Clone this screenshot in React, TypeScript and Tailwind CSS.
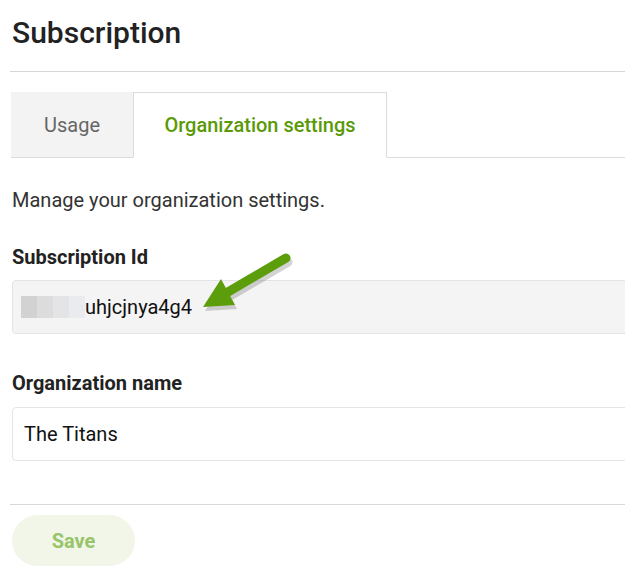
import React from 'react'

const blurBlocks = [
  { w: 'w-[16px]', c: 'bg-[#d2d2d2]' },
  { w: 'w-[16px]', c: 'bg-[#dcdcdc]' },
  { w: 'w-[16px]', c: 'bg-[#e4e4e6]' },
  { w: 'w-[16px]', c: 'bg-[#e9ebee]' },
]

const Arrow = () => (
  <svg
    className="absolute left-[190px] top-[245px]"
    width="110"
    height="80"
    viewBox="0 0 110 80"
  >
    {/* soft shadow */}
    <g opacity="0.25" transform="translate(2 4)">
      <line x1="96" y1="13" x2="38" y2="47" stroke="#555" strokeWidth="9" strokeLinecap="round" />
      <polygon points="13,62 31,34 45,60" fill="#555" />
    </g>
    <line x1="96" y1="13" x2="38" y2="47" stroke="#5c9d0b" strokeWidth="9" strokeLinecap="round" />
    <polygon points="13,62 31,34 45,60" fill="#5c9d0b" />
  </svg>
)

export default function App() {
  return (
    <div
      className="relative w-[625px] h-[584px] overflow-hidden bg-white"
      style={{ fontFamily: 'Roboto, "Liberation Sans", sans-serif' }}
    >
      <div className="pl-[12px] pt-[15px]">
        <h1 className="text-[30px] font-medium leading-[36px] text-[#222]">Subscription</h1>
      </div>

      <div className="ml-[10px] mt-[20px] w-[640px] border-t border-[#d6d6d6]" />

      {/* Tabs */}
      <div className="ml-[11px] mt-[20px] flex w-[640px] border-b border-[#dcdcdc]">
        <div className="flex h-[65px] w-[122px] items-center justify-center bg-[#f3f3f3] text-[20px] text-[#666]">
          Usage
        </div>
        <div className="-mb-px flex h-[66px] w-[254px] items-center justify-center border border-b-white border-[#dcdcdc] bg-white text-[20px] font-medium text-[#5a9a08]">
          Organization settings
        </div>
      </div>

      <div className="pl-[12px]">
        <p className="mt-[30px] text-[20px] leading-[24px] text-[#333]">
          Manage your organization settings.
        </p>

        <div className="mt-[33px] text-[20px] font-bold leading-[24px] text-[#222]">Subscription Id</div>
        <div className="mt-[11px] flex h-[54px] w-[640px] items-center rounded-[4px] border border-[#e4e4e4] bg-[#f4f4f4] pl-[8px]">
          <div className="flex h-[22px]">
            {blurBlocks.map((b, i) => (
              <div key={i} className={`${b.w} ${b.c}`} />
            ))}
          </div>
          <span className="text-[20px] text-[#111]">uhjcjnya4g4</span>
        </div>

        <div className="mt-[37px] text-[20px] font-bold leading-[24px] text-[#222]">Organization name</div>
        <div className="mt-[12px] flex h-[54px] w-[640px] items-center rounded-[4px] border border-[#e4e4e4] bg-white pl-[11px]">
          <span className="text-[20px] text-[#111]">The Titans</span>
        </div>
      </div>

      <div className="ml-[10px] mt-[43px] w-[640px] border-t border-[#d9d9d9]" />

      <div className="pl-[12px] pt-[10px]">
        <button className="h-[51px] w-[123px] rounded-full bg-[#f1f6e9] text-[20px] font-bold text-[#98c46a]">
          Save
        </button>
      </div>

      <Arrow />
    </div>
  )
}
